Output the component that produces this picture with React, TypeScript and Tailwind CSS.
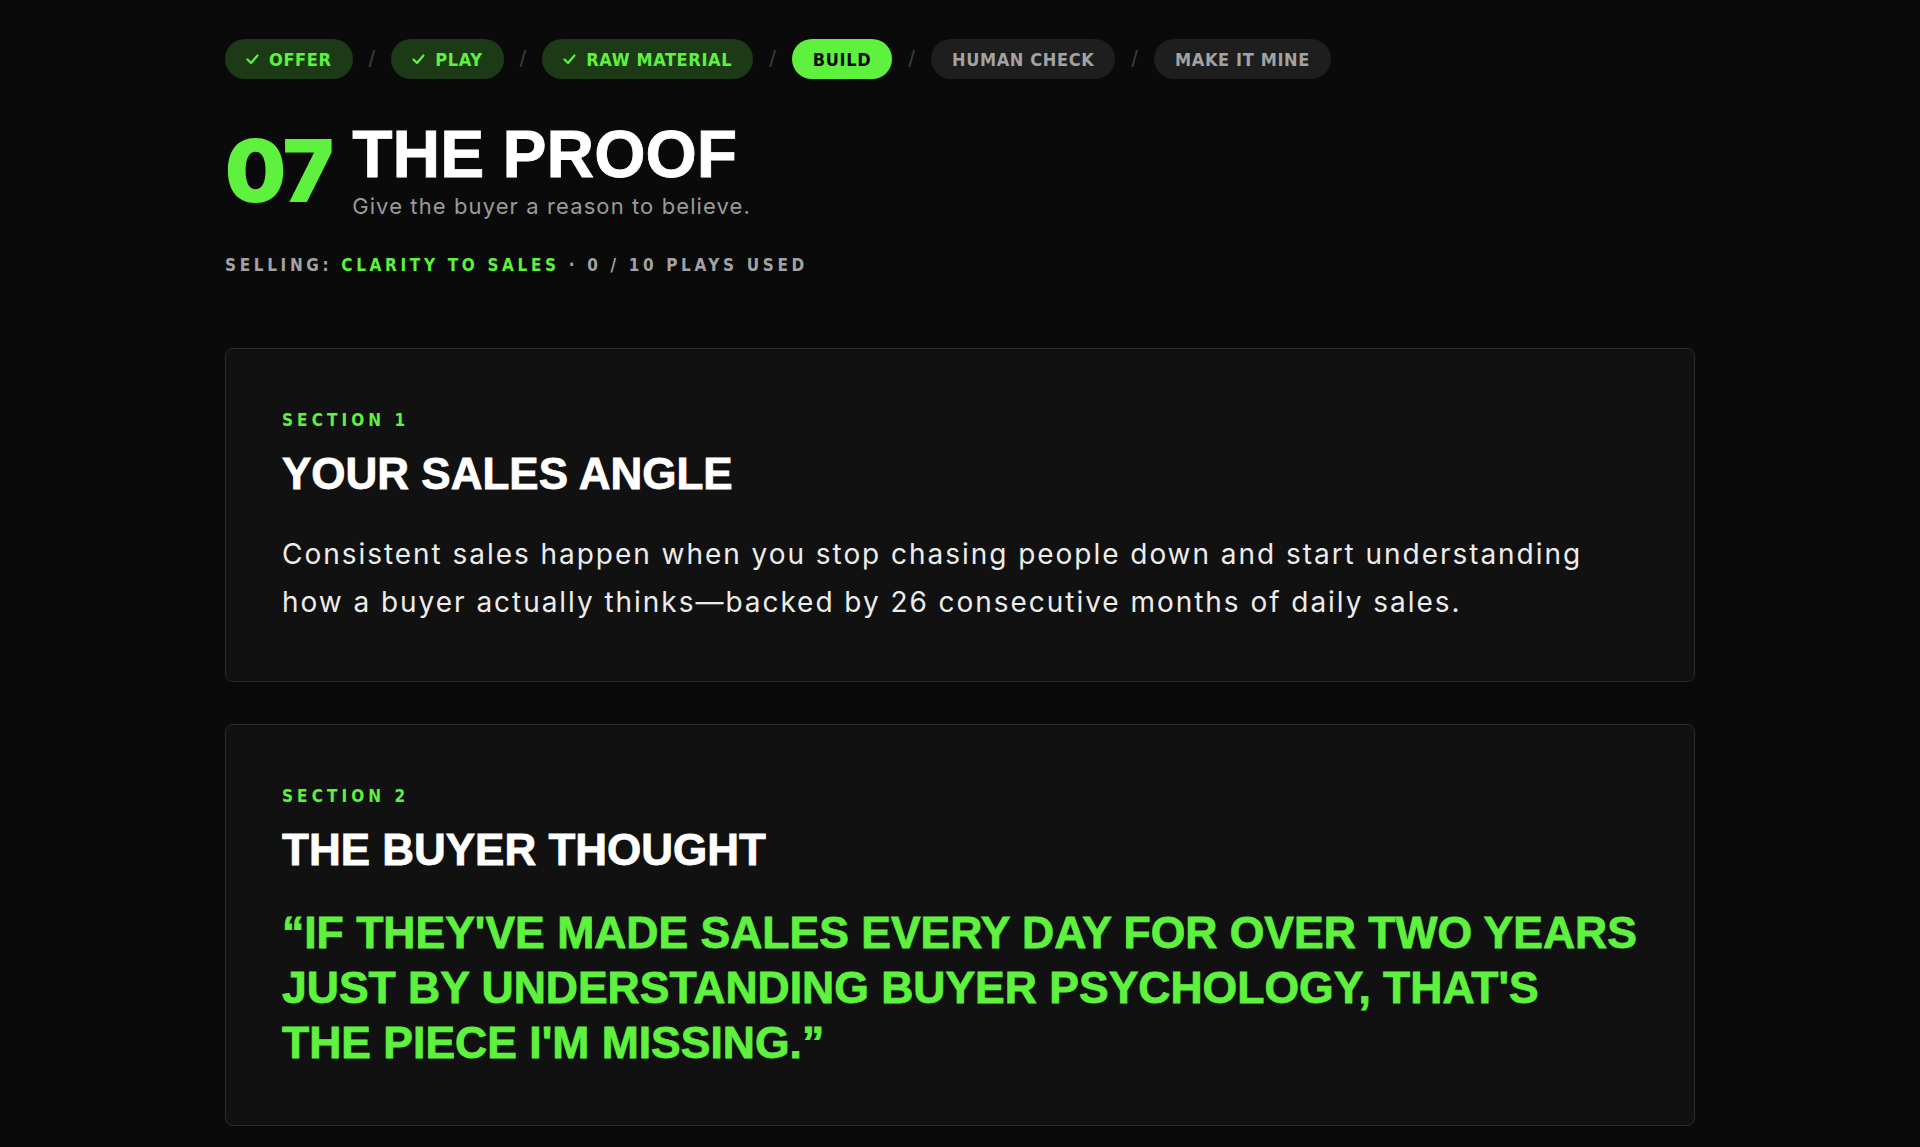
import { Fragment } from 'react'

const STEPS = [
  { label: 'OFFER', state: 'done' },
  { label: 'PLAY', state: 'done' },
  { label: 'RAW MATERIAL', state: 'done' },
  { label: 'BUILD', state: 'active' },
  { label: 'HUMAN CHECK', state: 'todo' },
  { label: 'MAKE IT MINE', state: 'todo' },
]

const NARROW = "font-['Liberation_Sans_Narrow','DejaVu_Sans_Condensed','Liberation_Sans',sans-serif]"
const HEAVY = "font-['Liberation_Sans',Arial,sans-serif]"
const BODY = "font-['Inter','Noto_Sans',sans-serif]"
// a little extra ink on the big headings
const INK = '[-webkit-text-stroke:0.8px_currentColor]'

function Check() {
  return (
    <svg width="13" height="11" viewBox="0 0 13 11" fill="none" className="shrink-0">
      <polyline points="1.5,5.5 5,9 11.5,1.5" stroke="currentColor" strokeWidth="2.2" strokeLinecap="round" strokeLinejoin="round" />
    </svg>
  )
}

function Steps() {
  return (
    <div className="flex items-center gap-4">
      {STEPS.map((s, i) => (
        <Fragment key={s.label}>
          {i > 0 && <span className={`${HEAVY} text-[24px] font-light text-[#3a3a3a]`}>/</span>}
          <span
            className={[
              NARROW,
              'flex h-10 items-center gap-[10px] rounded-full px-[21px] text-[18px] font-bold tracking-[0.035em]',
              s.state === 'done'
                ? 'bg-[#1d3a17] text-[#5ef23f]'
                : s.state === 'active'
                  ? 'bg-[#5ef23f] text-[#0b0b0b]'
                  : 'bg-[#1e1e1e] text-[#a3a3a3]',
            ].join(' ')}
          >
            {s.state === 'done' && <Check />}
            {s.label}
          </span>
        </Fragment>
      ))}
    </div>
  )
}

function Card({ n, title, children }: { n: number; title: string; children: React.ReactNode }) {
  return (
    <section className="rounded-lg border border-[#2b2b2b] bg-[#111111] px-14 pt-[61px] pb-[55px]">
      <div className={`${NARROW} text-[17px] leading-5 font-bold tracking-[0.24em] text-[#5ef23f]`}>SECTION {n}</div>
      <h2 className={`${HEAVY} ${INK} mt-5 text-[44px] leading-[1.1] font-bold text-white`}>{title}</h2>
      {children}
    </section>
  )
}

export default function App() {
  return (
    <div className="min-h-screen bg-[#0a0a0a] pt-[39px] pb-10">
      <div className="mx-auto max-w-[1470px]">
        <Steps />

        <div className="mt-[42px] flex items-center gap-5">
          <div className={`${BODY} text-[86px] leading-none font-black tracking-[-0.02em] text-[#5ef23f]`}>07</div>
          <div>
            <h1 className={`${HEAVY} ${INK} text-[66px] leading-none font-bold text-white`}>THE PROOF</h1>
            <p className={`${BODY} mt-1 text-[22px] leading-[1.4] tracking-[0.05em] text-[#9a9a9a]`}>
              Give the buyer a reason to believe.
            </p>
          </div>
        </div>

        <div className={`${NARROW} mt-[33px] text-[17px] leading-5 font-bold tracking-[0.215em] text-[#a3a3a3]`}>
          SELLING: <span className="text-[#5ef23f]">CLARITY TO SALES</span> · 0 / 10 PLAYS USED
        </div>

        <div className="mt-[73px] flex flex-col gap-[42px]">
          <Card n={1} title="YOUR SALES ANGLE">
            <p className={`${BODY} mt-8 max-w-[1320px] text-[28px] leading-[48px] tracking-[0.07em] text-[#ececec]`}>
              Consistent sales happen when you stop chasing people down and start understanding how a buyer actually
              thinks—backed by 26 consecutive months of daily sales.
            </p>
          </Card>
          <Card n={2} title="THE BUYER THOUGHT">
            <p className={`${HEAVY} ${INK} mt-[30px] text-[44.5px] leading-[55px] font-bold text-[#5ef23f]`}>
              “IF THEY'VE MADE SALES EVERY DAY FOR OVER TWO YEARS
              <br />
              JUST BY UNDERSTANDING BUYER PSYCHOLOGY, THAT'S
              <br />
              THE PIECE I'M MISSING.”
            </p>
          </Card>
        </div>
      </div>
    </div>
  )
}
